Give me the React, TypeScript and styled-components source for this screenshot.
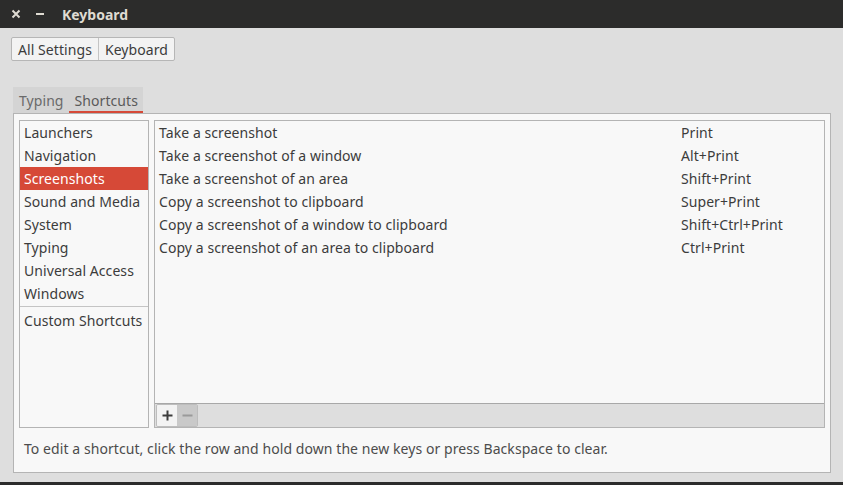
import React from "react";
import styled, { createGlobalStyle } from "styled-components";

const Global = createGlobalStyle`
  html, body { margin: 0; padding: 0; }
  body {
    background: #dedede;
    font-family: "Noto Sans", "Open Sans", sans-serif;
    font-size: 14px;
    letter-spacing: 0.07px;
    color: #3c3c3c;
  }
`;

const Window = styled.div`
  width: 843px;
  height: 485px;
  display: flex;
  flex-direction: column;
  background: #dedede;
  overflow: hidden;
`;

const TitleBar = styled.div`
  height: 28px;
  flex: none;
  background: #2c2c2b;
  display: flex;
  align-items: center;
  color: #dfdbd2;
`;

const WinButton = styled.span<{ $gap?: number }>`
  width: 12px;
  margin-left: ${(p) => p.$gap ?? 10}px;
  display: flex;
  align-items: center;
  justify-content: center;
`;

const Title = styled.span`
  margin-left: 16px;
  font-weight: bold;
  font-size: 14px;
  letter-spacing: 0;
  color: #dfdbd2;
`;

const Body = styled.div`
  flex: 1;
  display: flex;
  flex-direction: column;
  padding: 9px 12px 0 11px;
`;

const Breadcrumb = styled.div`
  display: flex;
  align-self: flex-start;
  border: 1px solid #b6b6b6;
  border-radius: 2px;
  background: #f3f3f3;
  height: 22px;
`;

const Crumb = styled.div<{ $last?: boolean }>`
  padding: 0 6px;
  display: flex;
  align-items: center;
  color: #3c3c3c;
  border-right: ${(p) => (p.$last ? "none" : "1px solid #c4c4c4")};
`;

const TabBar = styled.div`
  margin-top: 26px;
  margin-left: 2px;
  align-self: flex-start;
  display: flex;
  height: 26px;
  background: #d4d4d4;
`;

const Tab = styled.div<{ $active?: boolean }>`
  padding: 0 5px 0 6px;
  display: flex;
  align-items: center;
  color: ${(p) => (p.$active ? "#5a5a5a" : "#6a6a6a")};
  box-shadow: ${(p) => (p.$active ? "inset 0 -2px 0 #d64937" : "none")};
`;

const Pane = styled.div`
  margin-left: 2px;
  height: 352px;
  border: 1px solid #b4b4b4;
  background: #f8f8f8;
  display: flex;
  flex-direction: column;
  padding: 6px 5px 0 5px;
`;

const Columns = styled.div`
  display: flex;
  gap: 5px;
  height: 308px;
`;

const SideList = styled.div`
  width: 128px;
  border: 1px solid #b4b4b4;
  background: #f8f8f8;
  display: flex;
  flex-direction: column;
`;

const SideItem = styled.div<{ $selected?: boolean }>`
  height: 23px;
  display: flex;
  align-items: center;
  padding-left: 4px;
  white-space: nowrap;
  background: ${(p) => (p.$selected ? "#d64937" : "transparent")};
  color: ${(p) => (p.$selected ? "#ffffff" : "#3c3c3c")};
`;

const SideSep = styled.div`
  height: 1px;
  background: #c4c4c4;
  margin: 1px 0 2px 0;
`;

const Table = styled.div`
  flex: 1;
  border: 1px solid #b4b4b4;
  background: #f8f8f8;
  display: flex;
  flex-direction: column;
`;

const Rows = styled.div`
  flex: 1;
`;

const Row = styled.div`
  height: 23px;
  display: grid;
  grid-template-columns: 522px 1fr;
  align-items: center;
  padding-left: 4px;
`;

const Toolbar = styled.div`
  height: 23px;
  border-top: 1px solid #a8a8a8;
  background: #dedede;
  display: flex;
  align-items: center;
  padding-left: 1px;
`;

const ToolGroup = styled.div`
  display: flex;
  height: 21px;
  border: 1px solid #bdbdbd;
  border-radius: 2px;
  overflow: hidden;
`;

const ToolButton = styled.div<{ $disabled?: boolean }>`
  width: 20px;
  display: flex;
  align-items: center;
  justify-content: center;
  background: ${(p) => (p.$disabled ? "#c9c9c9" : "#f3f3f3")};
  color: ${(p) => (p.$disabled ? "#9a9a9a" : "#3c3c3c")};
`;

const Footer = styled.div`
  height: 39px;
  display: flex;
  align-items: center;
  padding-left: 5px;
  padding-top: 1px;
  color: #4c4c4c;
`;

const BottomEdge = styled.div`
  height: 3px;
  background: #2c2c2b;
  flex: none;
`;

const categories = [
  "Launchers",
  "Navigation",
  "Screenshots",
  "Sound and Media",
  "System",
  "Typing",
  "Universal Access",
  "Windows",
];

const shortcuts: [string, string][] = [
  ["Take a screenshot", "Print"],
  ["Take a screenshot of a window", "Alt+Print"],
  ["Take a screenshot of an area", "Shift+Print"],
  ["Copy a screenshot to clipboard", "Super+Print"],
  ["Copy a screenshot of a window to clipboard", "Shift+Ctrl+Print"],
  ["Copy a screenshot of an area to clipboard", "Ctrl+Print"],
];

export default function App() {
  return (
    <>
      <Global />
      <Window>
        <TitleBar>
          <WinButton>
            <svg width="10" height="10" viewBox="0 0 10 10">
              <path d="M1.5 1.5 L8.5 8.5 M8.5 1.5 L1.5 8.5" stroke="#dfdbd2" strokeWidth="2" />
            </svg>
          </WinButton>
          <WinButton $gap={12}>
            <svg width="10" height="10" viewBox="0 0 10 10">
              <path d="M1 5 H9" stroke="#dfdbd2" strokeWidth="2" />
            </svg>
          </WinButton>
          <Title>Keyboard</Title>
        </TitleBar>
        <Body>
          <Breadcrumb>
            <Crumb>All Settings</Crumb>
            <Crumb $last>Keyboard</Crumb>
          </Breadcrumb>
          <TabBar>
            <Tab>Typing</Tab>
            <Tab $active>Shortcuts</Tab>
          </TabBar>
          <Pane>
            <Columns>
              <SideList>
                {categories.map((c) => (
                  <SideItem key={c} $selected={c === "Screenshots"}>
                    {c}
                  </SideItem>
                ))}
                <SideSep />
                <SideItem>Custom Shortcuts</SideItem>
              </SideList>
              <Table>
                <Rows>
                  {shortcuts.map(([a, k]) => (
                    <Row key={a}>
                      <span>{a}</span>
                      <span>{k}</span>
                    </Row>
                  ))}
                </Rows>
                <Toolbar>
                  <ToolGroup>
                    <ToolButton>
                      <svg width="11" height="11" viewBox="0 0 11 11">
                        <path d="M5.5 0.5 V10.5 M0.5 5.5 H10.5" stroke="#3c3c3c" strokeWidth="2" />
                      </svg>
                    </ToolButton>
                    <ToolButton $disabled>
                      <svg width="11" height="11" viewBox="0 0 11 11">
                        <path d="M0.5 5.5 H10.5" stroke="#9a9a9a" strokeWidth="2" />
                      </svg>
                    </ToolButton>
                  </ToolGroup>
                </Toolbar>
              </Table>
            </Columns>
            <Footer>
              To edit a shortcut, click the row and hold down the new keys or press Backspace to clear.
            </Footer>
          </Pane>
        </Body>
        <BottomEdge />
      </Window>
    </>
  );
}
